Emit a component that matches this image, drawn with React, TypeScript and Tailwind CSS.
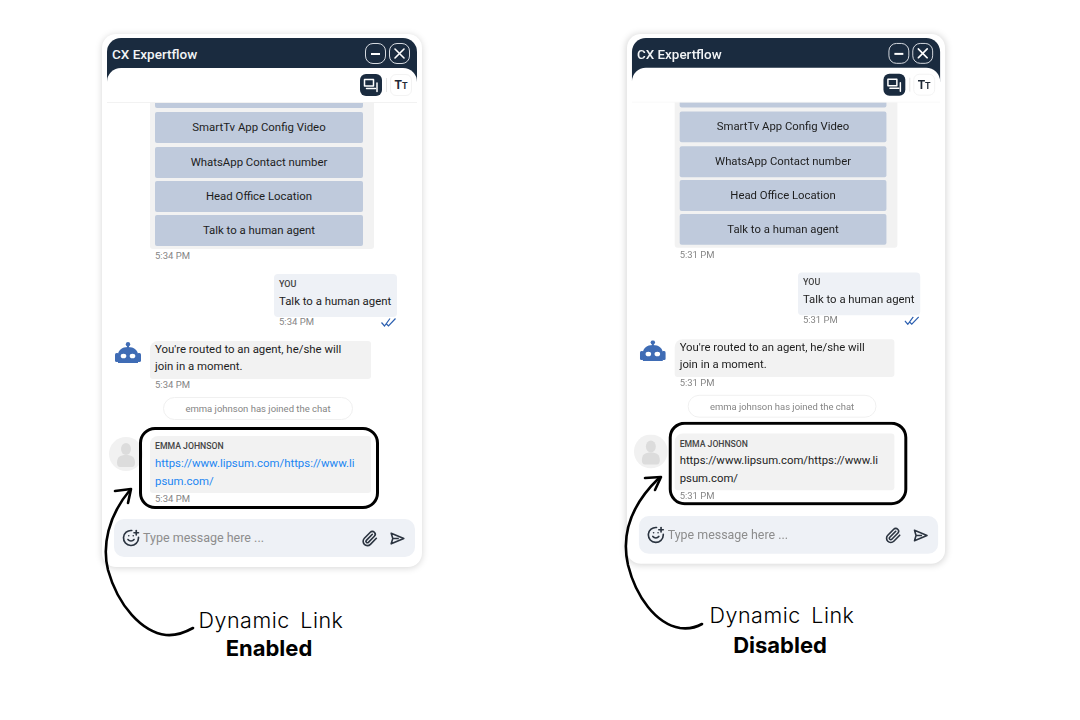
import { Paperclip, SmilePlus } from "lucide-react";

const options = ["SmartTv App Config Video", "WhatsApp Contact number", "Head Office Location", "Talk to a human agent"];

function ChatIcon() {
  return (
    <svg width="16" height="15" viewBox="0 0 16 15" fill="none" stroke="white" strokeWidth="1.5" strokeLinejoin="round" strokeLinecap="round">
      <path d="M1.5 1.5h9v6.5h-9z" />
      <path d="M3.5 10.5h9" />
      <path d="M14 5v8.5" />
    </svg>
  );
}

function Robot() {
  return (
    <svg width="26" height="21" viewBox="0 0 26 21">
      <circle cx="13" cy="2.2" r="2.2" fill="#3f6cb5" />
      <rect x="12" y="3" width="2" height="3" fill="#3f6cb5" />
      <path d="M3 21V13C3 8.5 7 5 13 5s10 3.5 10 8v8z" fill="#3f6cb5" />
      <rect x="0" y="11" width="4" height="9" rx="1.6" fill="#3f6cb5" />
      <rect x="22" y="11" width="4" height="9" rx="1.6" fill="#3f6cb5" />
      <ellipse cx="8.5" cy="14" rx="2.8" ry="2.3" fill="white" />
      <ellipse cx="17.5" cy="14" rx="2.8" ry="2.3" fill="white" />
    </svg>
  );
}

function Avatar() {
  return (
    <svg width="34" height="34" viewBox="0 0 34 34">
      <circle cx="17" cy="17" r="17" fill="#f1f1f1" />
      <ellipse cx="17" cy="12" rx="5" ry="6" fill="#dcdcdc" />
      <path d="M8 26c0-6 3-8 9-8s9 2 9 8c0 2-1 4-3 4H11c-2 0-3-2-3-4z" fill="#dcdcdc" />
    </svg>
  );
}

function Panel({
  time,
  linkClass,
  frameClass,
  panelClass,
}: {
  time: string;
  linkClass: string;
  frameClass: string;
  panelClass: string;
}) {
  const stamp = "h-[12px] text-[9.5px] leading-[12px] text-[#858585]";
  return (
    <div className={`relative w-[320px] h-[533px] origin-top-left rounded-[14px] bg-white pt-[4px] shadow-[0_1px_7px_rgba(0,0,0,0.17)] font-['Roboto',sans-serif] ${panelClass}`}>
      <div className="mx-[5px] flex h-[44px] items-start justify-between rounded-t-[14px] bg-[#1a2b3f] pl-[5px] pr-[7px] pt-[5px]">
        <span className="pt-[1px] text-[13.5px] font-medium leading-[20px] text-[#f2f4f6]">CX Expertflow</span>
        <div className="flex gap-[3px]">
          <span className="flex h-[21px] w-[21px] items-center justify-center rounded-[8px] border-[1.5px] border-[#d5d9df]">
            <span className="h-[2px] w-[9px] bg-white" />
          </span>
          <span className="flex h-[21px] w-[21px] items-center justify-center rounded-[8px] border-[1.5px] border-[#d5d9df]">
            <svg width="11" height="11" viewBox="0 0 11 11" stroke="white" strokeWidth="1.6" strokeLinecap="round">
              <path d="M1 1l9 9M10 1l-9 9" />
            </svg>
          </span>
        </div>
      </div>
      <div className="relative mx-[5px] -mt-[14px] flex h-[35px] items-center justify-end gap-[3.5px] rounded-t-[14px] border-b border-[#f2f2f2] bg-white pr-[5px]">
        <span className="flex h-[22px] w-[22px] items-center justify-center rounded-[6px] bg-[#1a2b3f]">
          <ChatIcon />
        </span>
        <span className="h-[14px] w-px bg-[#e5e5e5]" />
        <span className="flex h-[22px] w-[22px] items-baseline justify-center rounded-[6px] border border-[#f3f3f3] pt-[2px] font-bold leading-[16px] text-[#1f2a37]">
          <span className="text-[12px]">T</span>
          <span className="text-[9px]">T</span>
        </span>
      </div>

      <div className="pl-[48px] text-[11.4px] text-[#1d1d1d]">
        <div className="flex w-[224px] flex-col gap-[3.3px] rounded-b-[3px] bg-[#f2f2f2] px-[5px] pb-[3px]">
          <div className="mb-[1px] h-[5px] w-[208px] rounded-b-[2px] bg-[#bfcadc]" />
          {options.map((o) => (
            <div key={o} className="flex h-[31px] w-[208px] items-center justify-center rounded-[2px] bg-[#bfcadc]">
              {o}
            </div>
          ))}
        </div>
        <div className="flex h-[15px] items-start pl-[5px] text-[9.5px] leading-[13px] text-[#858585]">{time}</div>

        <div className="ml-[124px] mt-[10px] h-[43px] w-[123px] rounded-[4px] bg-[#eef1f6] px-[5px] pt-[4px]">
          <div className="h-[12px] text-[9px] font-medium leading-[12px] text-[#444]">YOU</div>
          <div className="mt-[2px] h-[18px] whitespace-nowrap leading-[18px]">Talk to a human agent</div>
        </div>
        <div className="ml-[124px] flex h-[10px] w-[123px] items-center justify-between pl-[5px] pr-[1px]">
          <span className="text-[9.5px] leading-[10px] text-[#858585]">{time}</span>
          <svg width="15" height="9" viewBox="0 0 15 9" fill="none" stroke="#2b5fb0" strokeWidth="1.2">
            <path d="M0.5 4.5l3 3.5 5.5-7.5M5 5.5l2.5 2.5 7-7.5" />
          </svg>
        </div>

        <div className="relative mt-[14px] h-[38px] w-[221px] rounded-r-[3px] rounded-bl-[3px] rounded-tl-[8px] bg-[#f2f2f2] px-[5px] leading-[17px]">
          You're routed to an agent, he/she will
          <br />
          join in a moment.
          <span className="absolute -left-[35px] top-[1px]">
            <Robot />
          </span>
        </div>
        <div className={`${stamp} pl-[5px]`}>{time}</div>

        <div className="ml-[13px] mt-[6px] flex h-[23px] w-[190px] items-center justify-center rounded-full border border-[#f0f0f0] text-[9.5px] text-[#858585]">
          emma johnson has joined the chat
        </div>

        <div className="relative mt-[16px] h-[57px] w-[221px] rounded-r-[3px] rounded-bl-[3px] rounded-tl-[8px] bg-[#f2f2f2] px-[5px] pt-[4px]">
          <div className="h-[12px] text-[8.7px] font-medium leading-[12px] text-[#444]">EMMA JOHNSON</div>
          <div className={`mt-[3px] whitespace-nowrap leading-[17.5px] ${linkClass}`}>
            https://www.lipsum.com/https://www.li
            <br />
            psum.com/
          </div>
          <span className="absolute -left-[41px] top-[1px]">
            <Avatar />
          </span>
        </div>
        <div className={`${stamp} pl-[5px]`}>{time}</div>
      </div>

      <div className="ml-[12px] mt-[14px] flex h-[38px] w-[301px] items-center rounded-[10px] bg-[#eef1f6] pl-[8px] pr-[10px]">
        <SmilePlus size={18} strokeWidth={2.2} className="text-[#2b3440]" />
        <span className="ml-[3px] flex-1 pt-[1px] text-[12.5px] text-[#8d8d8d]">Type message here ...</span>
        <Paperclip size={17} strokeWidth={2.3} className="mr-[12px] text-[#2b3440]" />
        <svg width="15" height="13" viewBox="0 0 15 13" fill="none" stroke="#2b3440" strokeWidth="1.6" strokeLinejoin="round">
          <path d="M1.2 1.2L13.8 6.5 1.2 11.8 2.8 6.5zM2.8 6.5h6" />
        </svg>
      </div>

      <div className={`pointer-events-none absolute rounded-[16px] border-[3px] border-black ${frameClass}`} />
    </div>
  );
}

function Caption({ bold, className, boldClass }: { bold: string; className: string; boldClass: string }) {
  return (
    <div className={`text-center font-['Inter',sans-serif] text-[21.5px] leading-[28px] text-black ${className}`}>
      <div className="font-light tracking-[0.5px] [word-spacing:4px]">Dynamic Link</div>
      <div className={`text-[22px] font-bold leading-[28px] -ml-[4px] ${boldClass}`}>{bold}</div>
    </div>
  );
}

export default function App() {
  return (
    <div className="relative h-[720px] w-[1080px] overflow-hidden bg-white">
      <div className="flex items-start pl-[102px] pt-[34px]">
        <div className="flex w-[320px] flex-col">
          <Panel
            time="5:34 PM"
            linkClass="text-[#1b86f2]"
            frameClass="left-[37px] top-[393px] h-[82px] w-[240px]"
            panelClass=""
          />
          <Caption bold="Enabled" className="ml-[18px] mt-[39px]" boldClass="mt-[0px]" />
        </div>
        <div className="ml-[205px] flex w-[320px] flex-col">
          <Panel
            time="5:31 PM"
            linkClass="text-[#1d1d1d]"
            frameClass="left-[42px] top-[390px] h-[84px] w-[240px]"
            panelClass="scale-[0.994]"
          />
          <Caption bold="Disabled" className="mt-[34px] w-[310px]" boldClass="mt-[2px]" />
        </div>
      </div>
      <svg className="pointer-events-none absolute left-0 top-0" width="1080" height="720" fill="none" stroke="black" strokeWidth="2.6" strokeLinecap="round" strokeLinejoin="round">
        <path d="M193 628C184 633 176 636 166 635C142 632 118 606 108 570C102 546 108 516 130 490" />
        <path d="M115 491L131 489L128 503" />
        <path d="M702 624C695 628 688 629 680 628C656 624 636 597 628 565C621 534 632 504 659 478" />
        <path d="M645 478L661 477L655 490" />
      </svg>
    </div>
  );
}
